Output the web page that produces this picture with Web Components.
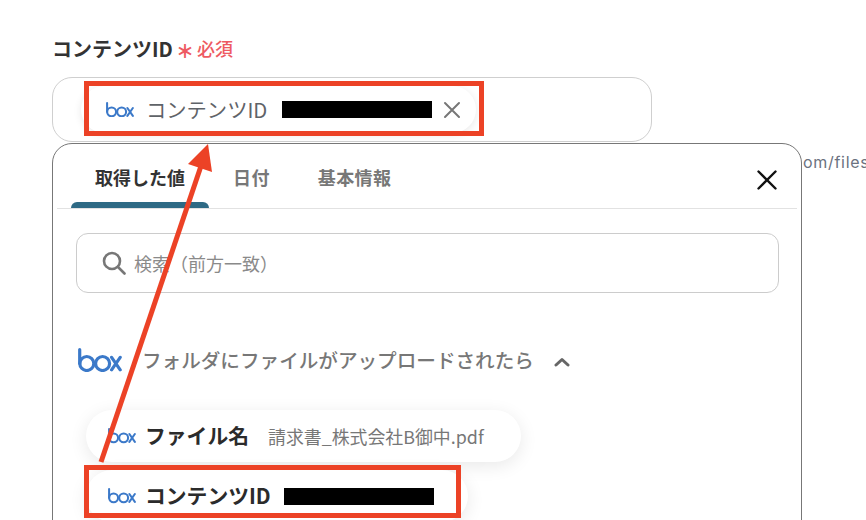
<!DOCTYPE html>
<html lang="ja">
<head>
<meta charset="utf-8">
<title>コンテンツID</title>
<style>
    html, body {
        margin: 0;
        width: 866px;
        height: 520px;
        overflow: hidden;
        background: #fff;
    }
    body {
        font-family: "Noto Sans CJK JP", "Noto Sans", sans-serif;
    }
</style>
</head>
<body>
<form-page>
    <content-field>
        <popup-panel slot="popup">
            <tab-bar></tab-bar>
            <search-box></search-box>
            <group-header></group-header>
            <value-chip name="ファイル名" value="請求書_株式会社B御中.pdf" width="435"></value-chip>
            <value-chip name="コンテンツID" masked width="382"></value-chip>
        </popup-panel>
    </content-field>
    <red-box style="left:84px;top:81px;width:400px;height:55px"></red-box>
    <red-box style="left:84px;top:465px;width:377px;height:53px"></red-box>
    <red-arrow></red-arrow>
</form-page>

<script>
const FONT = '"Noto Sans CJK JP", "Noto Sans", sans-serif';

class BoxLogo extends HTMLElement {
    constructor() {
        super();
        this.shadowDom = this.attachShadow({ mode: 'open' });
        const w = this.getAttribute('width') || 28;
        this.shadowDom.innerHTML = `
            <style>
                :host { display: block; flex: none; line-height: 0; }
            </style>
            <svg width="${w}" viewBox="0 0 44 24" fill="none" stroke="#3b79c9" stroke-width="3.2" stroke-linecap="round">
                <path d="M1.7 1.7V15.5"/>
                <circle cx="8.8" cy="15.5" r="7"/>
                <circle cx="24.6" cy="15.5" r="7"/>
                <path d="M33.6 9.4L42.2 21.8M42.2 9.4L33.6 21.8"/>
            </svg>
        `;
    }
}

class FormPage extends HTMLElement {
    constructor() {
        super();
        this.shadowDom = this.attachShadow({ mode: 'open' });
        this.shadowDom.innerHTML = `
            <style>
                :host {
                    display: block;
                    position: relative;
                    width: 866px;
                    height: 520px;
                    overflow: hidden;
                    box-sizing: border-box;
                    padding: 35px 0 0 52px;
                }
            </style>
            <slot></slot>
        `;
    }
}

class ContentField extends HTMLElement {
    constructor() {
        super();
        this.shadowDom = this.attachShadow({ mode: 'open' });
        this.shadowDom.innerHTML = `
            <style>
                :host { display: block; position: relative; font-family: ${FONT}; }
                .label {
                    display: flex;
                    align-items: center;
                    height: 26px;
                    font-size: 20px;
                    font-weight: 700;
                    color: #333;
                    margin-bottom: 16px;
                    white-space: nowrap;
                }
                .star { color: #ee5a62; font-size: 18px; font-weight: 900; width: 18px; margin: 4px 3px 0 3px; line-height: 26px; }
                .req { color: #ee5a62; font-size: 18px; font-weight: 500; }
                .input {
                    box-sizing: border-box;
                    width: 600px;
                    height: 65px;
                    border: 1px solid #cfcfcf;
                    border-radius: 20px;
                    padding: 8px 0 0 28px;
                }
                .chip {
                    display: inline-flex;
                    align-items: center;
                    box-sizing: border-box;
                    width: 395px;
                    height: 47px;
                    padding-left: 25px;
                    border-radius: 24px;
                    background: #fff;
                    box-shadow: 0 2px 8px rgba(0, 0, 0, .09);
                    font-size: 20.3px;
                    color: #5f6368;
                }
                .name { margin: 0 0 1px 12px; width: 121px; white-space: nowrap; }
                .mask { width: 150px; height: 17px; margin-left: 15px; background: #000; }
                .clear { margin-left: 11px; }
                .help {
                    margin: 9px 0 0 751px;
                    font-size: 16px;
                    line-height: 22px;
                    letter-spacing: .7px;
                    white-space: nowrap;
                    color: #6b7280;
                    font-family: Inter, "Noto Sans", sans-serif;
                }
                .popup { position: absolute; left: 0; top: 108px; }
            </style>
            <div class="label">コンテンツID<span class="star">＊</span><span class="req">必須</span></div>
            <div class="input">
                <div class="chip">
                    <box-logo width="28"></box-logo>
                    <span class="name">コンテンツID</span>
                    <span class="mask"></span>
                    <svg class="clear" width="18" height="18" viewBox="0 0 18 18" fill="none" stroke="#777" stroke-width="2" stroke-linecap="round">
                        <path d="M2 2L16 16M16 2L2 16"/>
                    </svg>
                </div>
            </div>
            <div class="help">om/files</div>
            <div class="popup"><slot name="popup"></slot></div>
        `;
    }
}

class PopupPanel extends HTMLElement {
    constructor() {
        super();
        this.shadowDom = this.attachShadow({ mode: 'open' });
        this.shadowDom.innerHTML = `
            <style>
                :host {
                    display: block;
                    box-sizing: border-box;
                    width: 750px;
                    height: 420px;
                    background: #fff;
                    border: 1.5px solid #777;
                    border-radius: 20px;
                }
            </style>
            <slot></slot>
        `;
    }
}

class TabBar extends HTMLElement {
    constructor() {
        super();
        this.shadowDom = this.attachShadow({ mode: 'open' });
        this.shadowDom.innerHTML = `
            <style>
                :host {
                    display: flex;
                    align-items: stretch;
                    box-sizing: border-box;
                    height: 65px;
                    margin: 0 4px;
                    padding-left: 14px;
                    border-bottom: 1px solid #e2e2e2;
                    font-size: 18px;
                    font-weight: 700;
                    color: #777;
                }
                .tab {
                    display: flex;
                    align-items: center;
                    padding: 2px 24px 0 24px;
                    white-space: nowrap;
                    position: relative;
                    letter-spacing: .4px;
                }
                .on { color: #333; width: 138px; box-sizing: border-box; letter-spacing: 0; }
                .on::after {
                    content: "";
                    position: absolute;
                    left: 0;
                    right: 0;
                    bottom: 0;
                    height: 6px;
                    border-radius: 6px 6px 0 0;
                    background: #2e6a85;
                }
                .close { margin: 26px 20px 0 auto; }
            </style>
            <div class="tab on">取得した値</div>
            <div class="tab">日付</div>
            <div class="tab">基本情報</div>
            <svg class="close" width="20" height="20" viewBox="0 0 20 20" fill="none" stroke="#111" stroke-width="2.4" stroke-linecap="round">
                <path d="M1.5 1.5L18.5 18.5M18.5 1.5L1.5 18.5"/>
            </svg>
        `;
    }
}

class SearchBox extends HTMLElement {
    constructor() {
        super();
        this.shadowDom = this.attachShadow({ mode: 'open' });
        this.shadowDom.innerHTML = `
            <style>
                :host {
                    display: flex;
                    align-items: center;
                    box-sizing: border-box;
                    height: 60px;
                    margin: 24px 22px 0 23px;
                    padding-left: 25px;
                    border: 1px solid #ccc;
                    border-radius: 12px;
                    font-size: 18px;
                    color: #8a8a8a;
                }
                span { margin-left: 8px; white-space: nowrap; }
            </style>
            <svg width="24" height="24" viewBox="0 0 24 24" fill="none" stroke="#777" stroke-width="2.6" stroke-linecap="round">
                <circle cx="10" cy="10" r="8"/>
                <path d="M16 16L22.5 22.5"/>
            </svg>
            <span>検索（前方一致）</span>
        `;
    }
}

class GroupHeader extends HTMLElement {
    constructor() {
        super();
        this.shadowDom = this.attachShadow({ mode: 'open' });
        this.shadowDom.innerHTML = `
            <style>
                :host {
                    display: flex;
                    align-items: center;
                    height: 24px;
                    margin: 55px 0 38px 25px;
                    font-size: 19.6px;
                    font-weight: 500;
                    color: #777;
                }
                span { margin-left: 20px; white-space: nowrap; margin-bottom: 1px; }
                svg { margin: 3px 0 0 20px; }
            </style>
            <box-logo width="44"></box-logo>
            <span>フォルダにファイルがアップロードされたら</span>
            <svg width="16" height="10" viewBox="0 0 16 10" fill="none" stroke="#666" stroke-width="3" stroke-linecap="round" stroke-linejoin="round">
                <path d="M2 8L8 2.5L14 8"/>
            </svg>
        `;
    }
}

class ValueChip extends HTMLElement {
    constructor() {
        super();
        this.shadowDom = this.attachShadow({ mode: 'open' });
        const value = this.hasAttribute('masked')
            ? '<span class="mask"></span>'
            : `<span class="value">${this.getAttribute('value')}</span>`;
        this.shadowDom.innerHTML = `
            <style>
                :host {
                    display: flex;
                    align-items: center;
                    box-sizing: border-box;
                    width: ${this.getAttribute('width')}px;
                    height: 52px;
                    margin: 0 0 8px 33px;
                    padding-left: 22px;
                    border-radius: 26px;
                    background: #fff;
                    box-shadow: 0 4px 18px rgba(0, 0, 0, .09);
                }
                .name { margin: 0 0 2px 9px; font-size: 20.8px; font-weight: 700; color: #2b2b2b; white-space: nowrap; }
                .value { margin: 0 0 1px 19px; font-size: 17.9px; color: #777; white-space: nowrap; }
                .mask { width: 150px; height: 17px; margin-left: 13px; background: #000; }
            </style>
            <box-logo width="28"></box-logo>
            <span class="name">${this.getAttribute('name')}</span>
            ${value}
        `;
    }
}

class RedBox extends HTMLElement {
    constructor() {
        super();
        this.shadowDom = this.attachShadow({ mode: 'open' });
        this.shadowDom.innerHTML = `
            <style>
                :host {
                    display: block;
                    position: absolute;
                    box-sizing: border-box;
                    border: 5px solid #ec4226;
                    pointer-events: none;
                }
            </style>
        `;
    }
}

class RedArrow extends HTMLElement {
    constructor() {
        super();
        this.shadowDom = this.attachShadow({ mode: 'open' });
        this.shadowDom.innerHTML = `
            <style>
                :host { display: block; position: absolute; left: 0; top: 0; pointer-events: none; }
                svg { display: block; }
            </style>
            <svg width="866" height="520" viewBox="0 0 866 520">
                <path d="M101 462L201 166" stroke="#ec4226" stroke-width="5" fill="none"/>
                <path d="M208 144L188 164L212 172Z" fill="#ec4226"/>
            </svg>
        `;
    }
}

window.customElements.define('box-logo', BoxLogo);
window.customElements.define('form-page', FormPage);
window.customElements.define('content-field', ContentField);
window.customElements.define('popup-panel', PopupPanel);
window.customElements.define('tab-bar', TabBar);
window.customElements.define('search-box', SearchBox);
window.customElements.define('group-header', GroupHeader);
window.customElements.define('value-chip', ValueChip);
window.customElements.define('red-box', RedBox);
window.customElements.define('red-arrow', RedArrow);
</script>
</body>
</html>
